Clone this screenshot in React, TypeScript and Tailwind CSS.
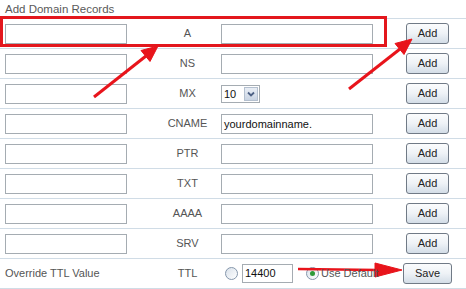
import React from 'react';

const rows = [
    { type: 'A', value: '' },
    { type: 'NS', value: '' },
    { type: 'MX', value: '', mx: true },
    { type: 'CNAME', value: 'yourdomainname.' },
    { type: 'PTR', value: '' },
    { type: 'TXT', value: '' },
    { type: 'AAAA', value: '' },
    { type: 'SRV', value: '' },
];

function TextBox({ width, value }: { width: string; value?: string }) {
    return (
        <div className={`${width} h-[20px] border border-[#a5acb2] bg-white pl-[2px] leading-[18px] text-[11px] text-[#111]`}>
            {value}
        </div>
    );
}

function Btn({ label, wide }: { label: string; wide?: boolean }) {
    return (
        <div
            className={`${wide ? 'w-[49px] h-[21px]' : 'w-[43px] h-[21px]'} flex items-center justify-center rounded-[3px] border border-[#707a86] bg-linear-to-b from-[#fbfcfd] via-[#eef2f6] to-[#d3dde7] text-[11px] text-[#222]`}
        >
            {label}
        </div>
    );
}

function Radio({ checked }: { checked?: boolean }) {
    return (
        <span className="flex h-[13px] w-[13px] items-center justify-center rounded-full border border-[#8496ab] bg-linear-to-br from-[#d9e1ea] to-white">
            {checked && <span className="h-[5px] w-[5px] rounded-full bg-[#2f9a3a]" />}
        </span>
    );
}

function MxSelect() {
    return (
        <div className="flex h-[18px] w-[39px] items-center border border-[#a5acb2] bg-white">
            <span className="flex-1 pl-[2px] text-[11px] leading-[16px] text-[#111]">10</span>
            <span className="mr-[1px] flex h-[14px] w-[14px] items-center justify-center border border-[#b4c0cf] bg-linear-to-b from-[#e9eef5] to-[#c9d4e3]">
                <svg width="8" height="6" viewBox="0 0 8 6">
                    <path d="M1 1.5 L4 4.5 L7 1.5" fill="none" stroke="#4d6185" strokeWidth="1.8" />
                </svg>
            </span>
        </div>
    );
}

export default function App() {
    return (
        <div className="relative h-[289px] w-[466px] overflow-hidden bg-white font-['Liberation_Sans',Arial,sans-serif] text-[11px] text-[#555]">
            <div className="h-[18px] pl-[5px] pt-[2px] text-[11.5px] leading-[14px] text-[#5a5a5a]">Add Domain Records</div>
            <div className="border-t border-[#d0dce6]">
                {rows.map((r) => (
                    <div key={r.type} className="grid h-[30px] grid-cols-[154px_67px_168px_77px] items-center border-b border-[#d0dce6]">
                        <div className="pl-[5px]">
                            <TextBox width="w-[122px]" />
                        </div>
                        <div className="text-center">{r.type}</div>
                        <div>{r.mx ? <MxSelect /> : <TextBox width="w-[152px]" value={r.value} />}</div>
                        <div className="flex justify-center">
                            <Btn label="Add" />
                        </div>
                    </div>
                ))}
                <div className="grid h-[30px] grid-cols-[154px_67px_168px_77px] items-center border-b border-[#d0dce6]">
                    <div className="pl-[5px]">Override TTL Value</div>
                    <div className="text-center">TTL</div>
                    <div className="flex items-center">
                        <span className="ml-[4px]">
                            <Radio />
                        </span>
                        <div className="ml-[4px] h-[19px] w-[51px] border border-[#a5acb2] pl-[2px] text-[11px] leading-[17px] text-[#111]">14400</div>
                        <span className="ml-[13px]">
                            <Radio checked />
                        </span>
                        <span className="relative z-10 ml-[2px] text-[#555]">Use Default</span>
                    </div>
                    <div className="flex justify-center">
                        <Btn label="Save" wide />
                    </div>
                </div>
            </div>

            {/* annotations */}
            <div className="pointer-events-none absolute left-0 top-[16px] h-[31px] w-[387px] border-[3px] border-[#e3171d]" />
            <svg className="pointer-events-none absolute left-0 top-0" width="466" height="289" viewBox="0 0 466 289">
                <g fill="#e8141b" stroke="#e8141b">
                    <line x1="94" y1="97" x2="146" y2="56" strokeWidth="3" />
                    <polygon points="158,46 150,61.5 141,50.5" strokeWidth="1" />
                    <line x1="349" y1="89" x2="400" y2="49" strokeWidth="3" />
                    <polygon points="412,39 404,54.5 395,43.5" strokeWidth="1" />
                    <line x1="298" y1="269" x2="378" y2="270" strokeWidth="2.5" />
                    <polygon points="402,270 375,263 375,277" strokeWidth="1" />
                </g>
            </svg>
        </div>
    );
}
